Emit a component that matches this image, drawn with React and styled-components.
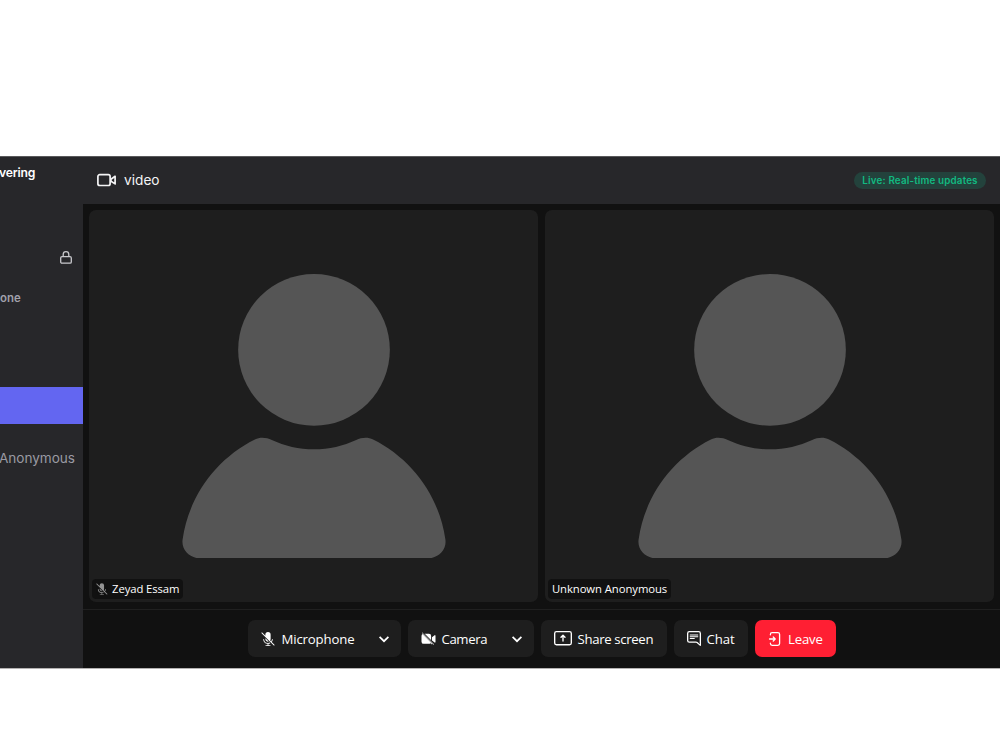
import React from 'react';
import styled, { createGlobalStyle } from 'styled-components';

const GlobalStyle = createGlobalStyle`
  * { box-sizing: border-box; }
  body { margin: 0; background: #fff; overflow: hidden; }
`;

const Page = styled.div`
  height: 750px;
  padding: 156px 0 81px;
  background: #fff;
`;
const Shell = styled.div`
  display: flex;
  height: 513px;
  overflow: hidden;
  background: #111;
  border-top: 1px solid #59595b;
  border-bottom: 1px solid #b4b2b2;
  font-family: Inter, sans-serif;
`;
const Sidebar = styled.aside`
  width: 83px;
  flex: none;
  display: flex;
  flex-direction: column;
  background: #27272a;
  white-space: nowrap;
`;
const ServerName = styled.div`
  height: 32px;
  margin-left: -1px;
  line-height: 32px;
  font-size: 12.2px;
  font-weight: 600;
  letter-spacing: -0.2px;
  color: #fff;
`;
const LockRow = styled.div`
  display: flex;
  justify-content: flex-end;
  margin-top: 61px;
  padding-right: 10px;
  height: 15px;
  color: #c9c9cd;
`;
const Section = styled.div`
  margin-top: 23px;
  height: 20px;
  line-height: 20px;
  font-size: 11.4px;
  font-weight: 600;
  color: #a1a1aa;
`;
const ActiveChannel = styled.div`
  margin-top: 79px;
  height: 37px;
  background: #6366f1;
`;
const Member = styled.div`
  margin-top: 24px;
  margin-left: -1px;
  height: 20px;
  line-height: 20px;
  font-size: 13.6px;
  letter-spacing: -0.04px;
  color: #9a9aa3;
`;
const Main = styled.main`
  flex: 1;
  min-width: 0;
  display: flex;
  flex-direction: column;
`;
const Header = styled.header`
  height: 47px;
  flex: none;
  display: flex;
  align-items: center;
  padding: 0 14px 1px;
  background: #27272a;
  color: #f4f4f5;
`;
const Title = styled.span`
  margin-left: 7px;
  font-size: 13.7px;
  line-height: 20px;
`;
const Badge = styled.span`
  margin-left: auto;
  width: 132px;
  height: 17px;
  border-radius: 9px;
  background: #23423c;
  color: #12b981;
  font-size: 9.8px;
  line-height: 17px;
  font-weight: 600;
  letter-spacing: 0.17px;
  text-align: center;
  white-space: nowrap;
`;
const Grid = styled.section`
  display: grid;
  grid-template-columns: 449px 449px;
  gap: 6.5px;
  height: 406px;
  padding: 6px 5px 7px 6.4px;
`;
const Tile = styled.div`
  display: flex;
  justify-content: center;
  position: relative;
  border-radius: 7px;
  background: #1e1e1e;
  overflow: hidden;
`;
const Avatar = styled.svg`
  width: 304px;
  height: 303.4px;
  margin: 44.5px 0 0 1px;
  flex: none;
`;
const Nameplate = styled.div`
  position: absolute;
  left: 3px;
  bottom: 3px;
  height: 20px;
  width: ${p => p.$width}px;
  padding: 0 4px;
  display: flex;
  align-items: center;
  gap: 4px;
  border-radius: 4px;
  background: #111;
  color: #fff;
  font: 11.3px/20px "Open Sans", sans-serif;
  letter-spacing: ${p => p.$spacing}px;
  white-space: nowrap;
  svg { opacity: 0.55; }
`;
const ControlBar = styled.footer`
  display: flex;
  justify-content: center;
  gap: 7px;
  height: 59px;
  padding: 10px 0 12px;
  border-top: 1px solid #202020;
`;
const Button = styled.button`
  width: ${p => p.$width}px;
  height: 37px;
  padding: 0 0 0 13px;
  display: flex;
  align-items: center;
  border: 0;
  border-radius: 7px;
  background: ${p => (p.$danger ? '#ff1f33' : '#1e1e1e')};
  color: #fff;
  font: 13.2px/20px "Open Sans", sans-serif;
  letter-spacing: ${p => p.$spacing || 0}px;
  white-space: nowrap;
`;
const Label = styled.span`
  margin-left: ${p => p.$gap}px;
`;
const Chevron = styled.svg`
  margin-left: auto;
  margin-right: 11px;
`;

const MicOff = ({ size = 14 }) => (
  <svg width={size} height={size} viewBox="0 0 16 16" fill="currentColor">
    <path d="M12.227 11.52a5.477 5.477 0 0 0 1.246-2.97.5.5 0 0 0-.995-.1 4.478 4.478 0 0 1-.962 2.359l-1.07-1.07C10.794 9.247 11 8.647 11 8V3a3 3 0 0 0-6 0v1.293L1.354.646a.5.5 0 1 0-.708.708l14 14a.5.5 0 0 0 .708-.708zM8 12.5c.683 0 1.33-.152 1.911-.425l.743.743c-.649.359-1.378.59-2.154.66V15h2a.5.5 0 0 1 0 1h-5a.5.5 0 0 1 0-1h2v-1.522a5.502 5.502 0 0 1-4.973-4.929.5.5 0 0 1 .995-.098A4.502 4.502 0 0 0 8 12.5z" />
    <path d="M8.743 10.907 5 7.164V8a3 3 0 0 0 3.743 2.907z" />
  </svg>
);
const CameraOff = () => (
  <svg width="15" height="14" viewBox="0 0 16 16" fill="currentColor">
    <path d="M3.4 2H8.5A2.5 2.5 0 0 1 11 4.5v5.1zM0 4.5C0 3.6.5 2.8 1.2 2.35L12.5 13.65l-.5.5L10.2 12.8A2.5 2.5 0 0 1 8.5 13.5h-6A2.5 2.5 0 0 1 0 11zM12 5.9l3-2.2a.6.6 0 0 1 1 .5v7.3a.6.6 0 0 1-1 .5l-3-2.2z" />
    <path d="m1.1 1.2 12.8 12.8" stroke="currentColor" strokeWidth="1" strokeLinecap="round" />
    <path d="m2.1.9 12.3 12.3" stroke="#1e1e1e" strokeWidth=".7" />
  </svg>
);
const ScreenShare = () => (
  <svg width="18" height="14.4" viewBox="0 0 20 16" fill="currentColor">
    <path fillRule="evenodd" d="M0 2.75A2.75 2.75 0 0 1 2.75 0h14.5A2.75 2.75 0 0 1 20 2.75v10.5A2.75 2.75 0 0 1 17.25 16H2.75A2.75 2.75 0 0 1 0 13.25zM2.75 1.5c-.69 0-1.25.56-1.25 1.25v10.5c0 .69.56 1.25 1.25 1.25h14.5c.69 0 1.25-.56 1.25-1.25V2.75c0-.69-.56-1.25-1.25-1.25z" />
    <path d="M9.47 4.22a.75.75 0 0 1 1.06 0l2.25 2.25a.75.75 0 0 1-1.06 1.06l-.97-.97v4.69a.75.75 0 0 1-1.5 0V6.56l-.97.97a.75.75 0 0 1-1.06-1.06z" />
  </svg>
);
const ChatIcon = () => (
  <svg width="14" height="15.75" viewBox="0 0 16 18" fill="currentColor">
    <path fillRule="evenodd" d="M0 2.75A2.75 2.75 0 0 1 2.75 0h10.5A2.75 2.75 0 0 1 16 2.75v13.594a.75.75 0 0 1-1.234.572l-3.691-3.12a1.25 1.25 0 0 0-.807-.296H2.75A2.75 2.75 0 0 1 0 10.75zM2.75 1.5c-.69 0-1.25.56-1.25 1.25v8c0 .69.56 1.25 1.25 1.25h7.518c.65 0 1.279.23 1.775.65l2.457 2.077V2.75c0-.69-.56-1.25-1.25-1.25z" />
    <path d="M3 4.5a.5.5 0 0 1 .5-.5h9a.5.5 0 0 1 0 1h-9a.5.5 0 0 1-.5-.5Zm0 2a.5.5 0 0 1 .5-.5h9a.5.5 0 0 1 0 1h-9a.5.5 0 0 1-.5-.5Zm0 2a.5.5 0 0 1 .5-.5h5a.5.5 0 0 1 0 1h-5a.5.5 0 0 1-.5-.5Z" />
  </svg>
);
const LeaveIcon = () => (
  <svg width="14" height="14" viewBox="0 0 16 16" fill="currentColor">
    <path d="M2 2.75A2.75 2.75 0 0 1 4.75 0h6.5A2.75 2.75 0 0 1 14 2.75v10.5A2.75 2.75 0 0 1 11.25 16h-6.5A2.75 2.75 0 0 1 2 13.25v-.5a.75.75 0 0 1 1.5 0v.5c0 .69.56 1.25 1.25 1.25h6.5c.69 0 1.25-.56 1.25-1.25V2.75c0-.69-.56-1.25-1.25-1.25h-6.5c-.69 0-1.25.56-1.25 1.25v.5a.75.75 0 0 1-1.5 0z" />
    <path d="M8.78 7.47a.75.75 0 0 1 0 1.06l-2.25 2.25a.75.75 0 1 1-1.06-1.06l.97-.97H1.75a.75.75 0 0 1 0-1.5h4.69l-.97-.97a.75.75 0 0 1 1.06-1.06z" />
  </svg>
);
const Down = () => (
  <Chevron width="12" height="12" viewBox="0 0 12 12" fill="none" stroke="currentColor" strokeWidth="1.7">
    <path d="m1.6 3.8 4.4 4.4 4.4-4.4" />
  </Chevron>
);
const VideoIcon = () => (
  <svg width="20" height="14" viewBox="0 0 20 14" fill="none" stroke="currentColor" strokeWidth="1.7" strokeLinejoin="round">
    <rect x="0.9" y="1.7" width="12.2" height="10.8" rx="1.8" />
    <path d="m14 6.2 4.1-2.9v7.6L14 8.2z" />
  </svg>
);
const LockIcon = () => (
  <svg width="14" height="15" viewBox="0 0 14 15" fill="none" stroke="currentColor" strokeWidth="1.3">
    <rect x="1.7" y="6.6" width="10.6" height="6.6" rx="1.3" />
    <path d="M4.2 6.6V4.4a2.8 2.8 0 0 1 5.6 0v2.2" />
  </svg>
);
const Person = () => (
  <Avatar viewBox="0 0 320 320" fill="#555">
    <circle cx="160" cy="100" r="80" />
    <path d="M97.654 194.614c5.613-2.796 12.187-2.133 17.865.527C129.025 201.466 144.1 205 159.999 205c15.9 0 30.974-3.534 44.481-9.859 5.678-2.66 12.252-3.323 17.865-.527 40.358 20.105 69.64 59.122 76.246 105.448C300.15 310.997 291.045 320 280 320H40c-11.046 0-20.15-9.003-18.591-19.938 6.605-46.326 35.888-85.342 76.245-105.448Z" />
  </Avatar>
);

export default function App() {
  return (
    <Page>
      <GlobalStyle />
      <Shell>
        <Sidebar>
          <ServerName>vering</ServerName>
          <LockRow><LockIcon /></LockRow>
          <Section>one</Section>
          <ActiveChannel />
          <Member>Anonymous</Member>
        </Sidebar>
        <Main>
          <Header>
            <VideoIcon />
            <Title>video</Title>
            <Badge>Live: Real-time updates</Badge>
          </Header>
          <Grid>
            <Tile>
              <Person />
              <Nameplate $width={91} $spacing={-0.1}><MicOff size={14} />Zeyad Essam</Nameplate>
            </Tile>
            <Tile>
              <Person />
              <Nameplate $width={123} $spacing={-0.07}>Unknown Anonymous</Nameplate>
            </Tile>
          </Grid>
          <ControlBar>
            <Button $width={153} $spacing={-0.15}><MicOff /><Label $gap={7}>Microphone</Label><Down /></Button>
            <Button $width={126} $spacing={-0.38}><CameraOff /><Label $gap={6}>Camera</Label><Down /></Button>
            <Button $width={126} $spacing={-0.34}><ScreenShare /><Label $gap={6}>Share screen</Label></Button>
            <Button $width={74} $spacing={-0.1}><ChatIcon /><Label $gap={6}>Chat</Label></Button>
            <Button $width={81} $spacing={-0.2} $danger><LeaveIcon /><Label $gap={6.5}>Leave</Label></Button>
          </ControlBar>
        </Main>
      </Shell>
    </Page>
  );
}
